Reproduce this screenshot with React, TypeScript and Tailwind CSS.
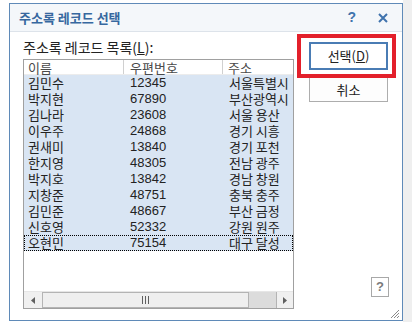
import React from 'react';

const rows = [
  ['김민수', '12345', '서울특별시'],
  ['박지현', '67890', '부산광역시'],
  ['김나라', '23608', '서울 용산'],
  ['이우주', '24868', '경기 시흥'],
  ['권새미', '13840', '경기 포천'],
  ['한지영', '48305', '전남 광주'],
  ['박지호', '13842', '경남 창원'],
  ['지창준', '48751', '충북 충주'],
  ['김민준', '48667', '부산 금정'],
  ['신호영', '52332', '강원 원주'],
  ['오현민', '75154', '대구 달성'],
];

const ko = "font-['Noto_Sans_CJK_KR',sans-serif]";
const num = "font-['Liberation_Sans_Narrow','Liberation_Sans',sans-serif]";

const App: React.FC = () => {
  return (
    <div className={`flex w-[412px] h-[322px] bg-white overflow-hidden ${ko}`}>
      <div className="pl-[9px] pt-[3px]">
        <div className="relative w-[394px] h-[318px] border border-[#5f8ab8] bg-white flex flex-col">
          {/* title bar */}
          <div className="h-[28px] shrink-0 flex items-center border-b border-[#dde3ea] bg-[#f4f7fa] pl-[9px] pr-[14px]">
            <span className="text-[13px] leading-[16px] font-bold text-[#37689f]">주소록 레코드 선택</span>
            <span className="ml-auto text-[14px] font-bold text-[#3f73ad] font-['Liberation_Sans',sans-serif]">?</span>
            <svg width="10" height="10" viewBox="0 0 10 10" className="ml-[22px]">
              <path d="M1 1 L9 9 M9 1 L1 9" stroke="#3f73ad" strokeWidth="2" />
            </svg>
          </div>

          {/* body */}
          <div className="flex flex-1 pl-[13px]">
            <div className="w-[271px] flex flex-col">
              <div className="mt-[7px] h-[16px] leading-[16px] text-[14px] text-[#222] whitespace-nowrap">
                주소록 레코드 목록(<span className="underline">L</span>):
              </div>
              <div className="mt-[4px] h-[250px] border border-[#a0a0a0] bg-white flex flex-col overflow-hidden">
                {/* header */}
                <div className="flex h-[15px] shrink-0 text-[13px] leading-[15px] text-[#4a4a4a] border-b border-[#ececec]">
                  <div className="w-[100px] pl-[4px] border-r border-[#d0d0d0]">이름</div>
                  <div className="w-[99px] pl-[6px] border-r border-[#d0d0d0]">우편번호</div>
                  <div className="flex-1 pl-[5px]">주소</div>
                </div>
                {rows.map((r, i) => (
                  <div
                    key={r[0]}
                    className={`flex h-[16px] shrink-0 leading-[16px] bg-[#d9e5f3] text-[#222] text-[13px] ${
                      i === rows.length - 1 ? 'outline-1 outline-dotted outline-black -outline-offset-1' : ''
                    }`}
                  >
                    <div className="w-[100px] pl-[4px]">{r[0]}</div>
                    <div className={`w-[99px] pl-[6px] ${num}`}>{r[1]}</div>
                    <div className="flex-1 pl-[6px] whitespace-nowrap overflow-hidden">{r[2]}</div>
                  </div>
                ))}
                <div className="flex-1" />
                {/* horizontal scrollbar */}
                <div className="h-[17px] shrink-0 flex bg-[#dcdcdc] border-t border-[#e6e6e6]">
                  <div className="w-[18px] bg-[#f0f0f0] flex items-center justify-center">
                    <svg width="4" height="7" viewBox="0 0 4 7">
                      <path d="M4 0 L0 3.5 L4 7 Z" fill="#606060" />
                    </svg>
                  </div>
                  <div className="w-[207px] border border-[#b4b4b4] bg-[#efefef] flex items-center justify-center gap-[2px]">
                    <div className="w-px h-[8px] bg-[#606060]" />
                    <div className="w-px h-[8px] bg-[#606060]" />
                    <div className="w-px h-[8px] bg-[#606060]" />
                  </div>
                  <div className="flex-1" />
                  <div className="w-[17px] bg-[#f0f0f0] border-l border-[#b4b4b4] flex items-center justify-center">
                    <svg width="4" height="7" viewBox="0 0 4 7">
                      <path d="M0 0 L4 3.5 L0 7 Z" fill="#606060" />
                    </svg>
                  </div>
                </div>
              </div>
            </div>

            {/* buttons */}
            <div className="ml-[15px] w-[79px] flex flex-col pt-[10px]">
              <button className="h-[28px] border-2 border-[#4a7cb4] bg-white text-[13px] text-[#222]">
                선택(<span className="underline">D</span>)
              </button>
              <button className="mt-[7px] h-[25px] border border-[#adadad] bg-[#fdfdfd] text-[13px] text-[#222]">
                취소
              </button>
              <div className="mt-[175px] self-end mr-[-1px] w-[18px] h-[20px] border border-[#a8a8a8] bg-white flex items-center justify-center text-[13px] font-bold text-[#7a7a7a] font-['Liberation_Sans',sans-serif]">
                ?
              </div>
            </div>
          </div>

          {/* highlight annotation */}
          <div className="absolute left-[287px] top-[30px] w-[99px] h-[44px] border-4 border-[#e3202b]" />

          {/* resize grip */}
          <svg width="9" height="9" viewBox="0 0 9 9" className="absolute right-[3px] bottom-[2px]">
            <path d="M9 1 L1 9 M9 4 L4 9 M9 7 L7 9" stroke="#8a8a8a" strokeWidth="1" />
          </svg>
        </div>
      </div>
      <div className="flex-1 bg-[#efefef]" />
    </div>
  );
};

export default App;
